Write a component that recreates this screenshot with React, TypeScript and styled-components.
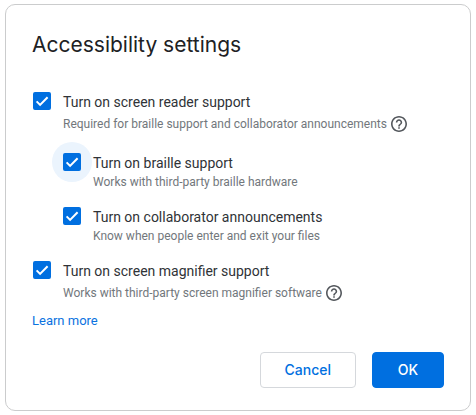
import React, { useId, useState } from "react";
import styled, { createGlobalStyle } from "styled-components";

const GlobalStyle = createGlobalStyle`
  *, *::before, *::after { box-sizing: border-box; }
  body {
    margin: 0;
    background: #fff;
    font-family: Roboto, "Liberation Sans", sans-serif;
  }
`;

const Page = styled.main`
  padding: 4px 5px;
`;

const Dialog = styled.section`
  padding: 26px 26px 22px;
  border: 1px solid #cbcccd;
  border-radius: 10px;
  background: #fff;
`;

const Title = styled.h1`
  margin: 0 0 33px;
  font-family: Inter, "Open Sans", sans-serif;
  font-size: 21px;
  font-weight: 400;
  line-height: 28px;
  color: #202124;
`;

const Options = styled.div`
  display: flex;
  flex-direction: column;
  gap: 16px;
`;

const Nested = styled(Options)`
  margin-top: 1px;
  padding-left: 30px;
`;

const Row = styled.div`
  display: grid;
  grid-template-columns: 20px 1fr;
  column-gap: 11px;
  align-items: start;
`;

const Tick = styled.span<{ $halo?: boolean }>`
  display: grid;
  width: 18px;
  height: 18px;
  margin-left: 1px;
  border-radius: 50%;
  background: ${(p) => (p.$halo ? "#ebf4fd" : "none")};
  box-shadow: ${(p) => (p.$halo ? "0 0 0 11px #ebf4fd" : "none")};

  & > * { grid-area: 1 / 1; }
`;

const Box = styled.input`
  appearance: none;
  width: 18px;
  height: 18px;
  margin: 0;
  border: 2px solid #5f6368;
  border-radius: 2px;
  background: #fff;

  &:checked {
    border-color: #006fe0;
    background: #006fe0;
  }
`;

const Check = styled.svg`
  width: 18px;
  height: 18px;
  z-index: 1;
  pointer-events: none;
`;

const Label = styled.label`
  display: block;
  font-size: 14px;
  line-height: 20px;
  color: #303337;
`;

const Hint = styled.div<{ $tall?: boolean }>`
  display: flex;
  align-items: center;
  gap: 4px;
  font-size: 12px;
  line-height: ${(p) => (p.$tall ? "24px" : "18px")};
  color: #72777c;
`;

const HelpButton = styled.button`
  display: flex;
  padding: 0;
  border: 0;
  background: none;
  color: #54585d;
`;

const LearnMore = styled.a`
  display: inline-block;
  margin-top: 7px;
  font-size: 13px;
  line-height: 18px;
  color: #0b72e0;
  text-decoration: none;
`;

const Actions = styled.footer`
  display: flex;
  justify-content: flex-end;
  gap: 16px;
  margin-top: 22px;
`;

const Button = styled.button<{ $primary?: boolean }>`
  min-width: 72px;
  height: 36px;
  padding: 0 24px;
  border: 1px solid ${(p) => (p.$primary ? "#006fe0" : "#d5d8dc")};
  border-radius: 4px;
  background: ${(p) => (p.$primary ? "#006fe0" : "#fff")};
  color: ${(p) => (p.$primary ? "#fff" : "#006fe0")};
  font-family: Inter, "Open Sans", sans-serif;
  font-size: 14px;
  font-weight: 500;
  line-height: 20px;
`;

function HelpIcon() {
  return (
    <svg width="16" height="16" viewBox="2 2 20 20" fill="currentColor" aria-hidden="true">
      <path d="M11 18h2v-2h-2v2zm1-16C6.48 2 2 6.48 2 12s4.48 10 10 10 10-4.48 10-10S17.52 2 12 2zm0 18c-4.41 0-8-3.59-8-8s3.59-8 8-8 8 3.59 8 8-3.59 8-8 8zm0-14c-2.21 0-4 1.79-4 4h2c0-1.1.9-2 2-2s2 .9 2 2c0 2-3 1.75-3 5h2c0-2.25 3-2.5 3-5 0-2.21-1.79-4-4-4z" />
    </svg>
  );
}

interface OptionProps {
  label: string;
  hint: string;
  help?: boolean;
  halo?: boolean;
}

function Option({ label, hint, help, halo }: OptionProps) {
  const id = useId();
  const [checked, setChecked] = useState(true);
  return (
    <Row>
      <Tick $halo={halo}>
        <Box
          id={id}
          type="checkbox"
          checked={checked}
          aria-describedby={`${id}-hint`}
          onChange={(e) => setChecked(e.target.checked)}
        />
        {checked && (
          <Check viewBox="0 0 18 18" aria-hidden="true">
            <path d="M3.6 9.4 7.1 12.9 14.6 5.2" fill="none" stroke="#fff" strokeWidth="2" />
          </Check>
        )}
      </Tick>
      <div>
        <Label htmlFor={id}>{label}</Label>
        <Hint $tall={help}>
          <span id={`${id}-hint`}>{hint}</span>
          {help && (
            <HelpButton type="button" aria-label="Help">
              <HelpIcon />
            </HelpButton>
          )}
        </Hint>
      </div>
    </Row>
  );
}

export default function App() {
  return (
    <>
      <GlobalStyle />
      <Page>
        <Dialog role="dialog" aria-labelledby="dialog-title">
          <Title id="dialog-title">Accessibility settings</Title>
          <Options>
            <Option
              label="Turn on screen reader support"
              hint="Required for braille support and collaborator announcements"
              help
            />
            <Nested>
              <Option label="Turn on braille support" hint="Works with third-party braille hardware" halo />
              <Option label="Turn on collaborator announcements" hint="Know when people enter and exit your files" />
            </Nested>
            <Option
              label="Turn on screen magnifier support"
              hint="Works with third-party screen magnifier software"
              help
            />
          </Options>
          <LearnMore href="#learn-more">Learn more</LearnMore>
          <Actions>
            <Button type="button">Cancel</Button>
            <Button type="button" $primary>OK</Button>
          </Actions>
        </Dialog>
      </Page>
    </>
  );
}
